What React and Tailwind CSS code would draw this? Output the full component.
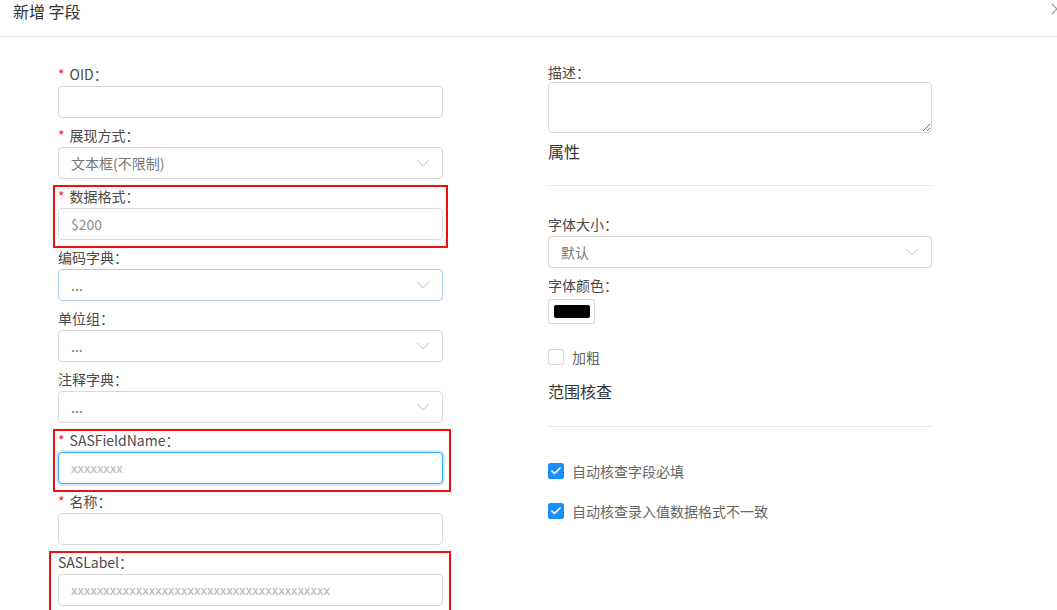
import { ChevronDown, Check } from "lucide-react";

function Label({ required, children, tall = true }) {
  return (
    <div className={`flex items-center text-[14px] leading-[22px] text-[#4a4a4a] ${tall ? "h-[24px]" : "h-[20px]"}`}>
      {required ? <span className="mr-[5px] text-[14px] text-[#f5222d]">*</span> : null}
      <span>{children}：</span>
    </div>
  );
}

function TextInput({ value, placeholder, focused }) {
  const border = focused ? "border-[#40a9ff] shadow-[0_0_0_2px_rgba(24,144,255,0.2)]" : "border-[#d9d9d9]";
  return (
    <div className={`flex h-[32px] items-center rounded-[4px] border bg-white px-[12px] text-[14px] ${border}`}>
      {value ? <span className="text-[#8c8c8c]">{value}</span> : <span className="text-[13px] text-[#b5b5b5]">{placeholder}</span>}
    </div>
  );
}

function Select({ value, hover }) {
  return (
    <div className={`flex h-[32px] items-center justify-between rounded-[4px] border bg-white pl-[12px] pr-[8px] text-[14px] ${hover ? "border-[#a9cdee]" : "border-[#d9d9d9]"}`}>
      <span className="text-[#777]">{value}</span>
      <ChevronDown size={22} strokeWidth={1} className="text-[#b5b5b5]" />
    </div>
  );
}

function Field({ label, required, children, mark }) {
  return (
    <div className="relative mb-[5px]">
      <Label required={required}>{label}</Label>
      {children}
      {mark ? <div className={`pointer-events-none absolute border-2 border-[#f01010] ${mark}`} /> : null}
    </div>
  );
}

function CheckItem({ checked, children, className = "" }) {
  return (
    <label className={`flex items-center gap-[8px] text-[14px] leading-[20px] text-[#666] ${className}`}>
      <span className={`flex h-[16px] w-[16px] items-center justify-center rounded-[2px] border ${checked ? "border-[#1890ff] bg-[#1890ff]" : "border-[#d9d9d9] bg-white"}`}>
        {checked ? <Check size={12} strokeWidth={3.5} className="text-white" /> : null}
      </span>
      {children}
    </label>
  );
}

export default function App() {
  return (
    <div className="relative h-[610px] w-full overflow-hidden bg-white font-['Noto_Sans_CJK_SC','Noto_Sans',sans-serif]">
      <div className="flex h-[37px] items-start border-b border-[#e8e8e8] px-[13px] pt-[1px]">
        <div className="text-[16px] leading-[20px] text-[#333]">新增 字段</div>
        <svg className="absolute right-[-6px] top-[3px]" width="12" height="12" viewBox="0 0 12 12" stroke="#999" strokeWidth="1.2">
          <path d="M1 1l10 10M11 1L1 11" />
        </svg>
      </div>

      <div className="flex pt-[25px]">
        <div className="ml-[58px] w-[385px]">
          <Field label="OID" required>
            <TextInput />
          </Field>
          <Field label="展现方式" required>
            <Select value="文本框(不限制)" />
          </Field>
          <Field label="数据格式" required mark="-left-[5px] -right-[5px] top-[1px] -bottom-[8px]">
            <TextInput value="$200" />
          </Field>
          <Field label="编码字典">
            <Select value="..." hover />
          </Field>
          <Field label="单位组">
            <Select value="..." />
          </Field>
          <Field label="注释字典">
            <Select value="..." />
          </Field>
          <Field label="SASFieldName" required mark="-left-[5px] -right-[8px] top-[1px] -bottom-[8px]">
            <TextInput placeholder="xxxxxxxx" focused />
          </Field>
          <Field label="名称" required>
            <TextInput />
          </Field>
          <Field label="SASLabel" mark="-left-[9px] -right-[8px] top-[1px] -bottom-[8px]">
            <TextInput placeholder="xxxxxxxxxxxxxxxxxxxxxxxxxxxxxxxxxxxxxxxx" />
          </Field>
        </div>

        <div className="ml-[105px] w-[384px]">
          <Label tall={false}>描述</Label>
          <textarea className="block h-[51px] w-full rounded-[4px] border border-[#d9d9d9] bg-white px-[12px] py-[4px] text-[14px] outline-none" />
          <div className="mt-[7px] text-[16px] leading-[22px] text-[#333]">属性</div>
          <div className="mt-[23px] border-t border-[#e8e8e8]" />

          <div className="mt-[26px]">
            <Label>字体大小</Label>
            <Select value="默认" />
          </div>
          <div className="mt-[5px]">
            <Label>字体颜色</Label>
            <div className="mt-[2px] flex h-[25px] w-[47px] items-center justify-center rounded-[2px] border border-[#d9d9d9] bg-white">
              <div className="h-[13px] w-[36px] rounded-[2px] bg-black" />
            </div>
          </div>

          <CheckItem className="mt-[23px]">加粗</CheckItem>

          <div className="mt-[13px] text-[16px] leading-[22px] text-[#333]">范围核查</div>
          <div className="mt-[24px] border-t border-[#e8e8e8]" />

          <CheckItem checked className="mt-[34px]">自动核查字段必填</CheckItem>
          <CheckItem checked className="mt-[20px]">自动核查录入值数据格式不一致</CheckItem>
        </div>
      </div>
    </div>
  );
}
